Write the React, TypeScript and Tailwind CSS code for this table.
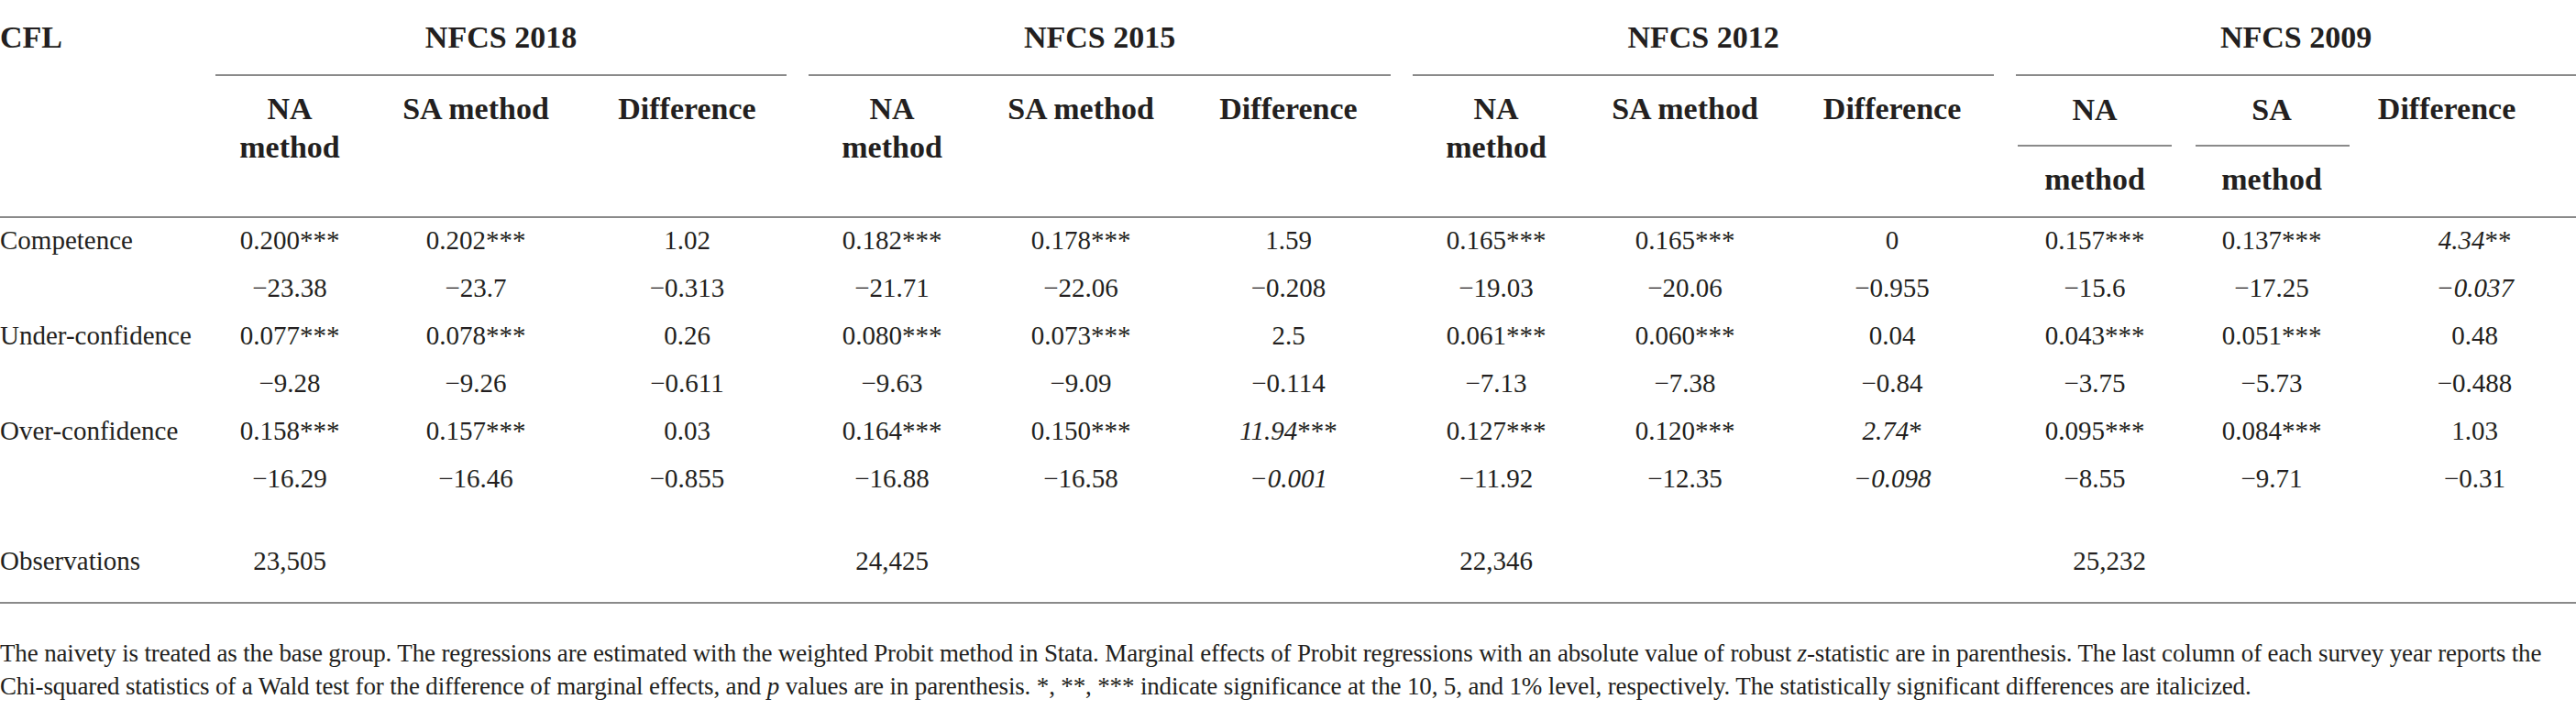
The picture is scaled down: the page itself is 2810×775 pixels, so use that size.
import React from 'react'

// "_" prefix marks an italicized (significant) difference
const rows: { label: string; values: string[] }[] = [
  { label: 'Competence', values: ['0.200***', '0.202***', '1.02', '0.182***', '0.178***', '1.59', '0.165***', '0.165***', '0', '0.157***', '0.137***', '_4.34**'] },
  { label: '', values: ['−23.38', '−23.7', '−0.313', '−21.71', '−22.06', '−0.208', '−19.03', '−20.06', '−0.955', '−15.6', '−17.25', '_−0.037'] },
  { label: 'Under-confidence', values: ['0.077***', '0.078***', '0.26', '0.080***', '0.073***', '2.5', '0.061***', '0.060***', '0.04', '0.043***', '0.051***', '0.48'] },
  { label: '', values: ['−9.28', '−9.26', '−0.611', '−9.63', '−9.09', '−0.114', '−7.13', '−7.38', '−0.84', '−3.75', '−5.73', '−0.488'] },
  { label: 'Over-confidence', values: ['0.158***', '0.157***', '0.03', '0.164***', '0.150***', '_11.94***', '0.127***', '0.120***', '_2.74*', '0.095***', '0.084***', '1.03'] },
  { label: '', values: ['−16.29', '−16.46', '−0.855', '−16.88', '−16.58', '_−0.001', '−11.92', '−12.35', '_−0.098', '−8.55', '−9.71', '−0.31'] },
]

const observations = ['23,505', '', '', '24,425', '', '', '22,346', '', '', '25,232', '', '']

const Value = ({ v }: { v: string }) => {
  if (!v.startsWith('_')) return <>{v}</>
  const raw = v.slice(1)
  const num = raw.replace(/\*+$/, '')
  const stars = raw.slice(num.length)
  return (
    <>
      <i>{num}</i>
      {stars}
    </>
  )
}

const cellPad = (i: number) => (i === 11 ? 'pl-[28px] pr-3' : 'px-3')

export default function App() {
  return (
    <div className="w-[2810px] h-[775px] overflow-hidden bg-white text-[#231f20] font-['Liberation_Serif',serif]">
      <table className="table-fixed border-collapse w-[2810px]">
        <colgroup>
          <col className="w-[223px]" />
          <col className="w-[186px]" />
          <col className="w-[220px]" />
          <col className="w-[241px]" />
          <col className="w-[206px]" />
          <col className="w-[206px]" />
          <col className="w-[247px]" />
          <col className="w-[206px]" />
          <col className="w-[206px]" />
          <col className="w-[246px]" />
          <col className="w-[196px]" />
          <col className="w-[190px]" />
          <col className="w-[237px]" />
        </colgroup>
        <thead className="text-[34px] leading-[42px] font-bold">
          <tr>
            <th className="text-left align-top pl-0 pt-[20px] font-bold">CFL</th>
            {['NFCS 2018', 'NFCS 2015', 'NFCS 2012', 'NFCS 2009'].map((g, i) => (
              <th key={g} colSpan={3} className={`align-top pt-[20px] font-bold text-center ${i === 3 ? 'pl-3 pr-0' : 'px-3'}`}>
                <div className="border-b-2 border-[#8a8a8a] pb-[19px]">{g}</div>
              </th>
            ))}
          </tr>
          <tr>
            <th className="border-b-2 border-[#8a8a8a]" />
            {[0, 1, 2].map(g => (
              <React.Fragment key={g}>
                <th className="align-top text-center px-3 pt-[15px] font-bold border-b-2 border-[#8a8a8a]">
                  NA
                  <br />
                  method
                </th>
                <th className="align-top text-center px-3 pt-[15px] font-bold border-b-2 border-[#8a8a8a]">SA method</th>
                <th className="align-top text-center px-3 pt-[15px] font-bold border-b-2 border-[#8a8a8a]">Difference</th>
              </React.Fragment>
            ))}
            {['NA', 'SA'].map(t => (
              <th key={t} className="align-top text-center px-3 pt-[16px] pb-[19px] font-bold border-b-2 border-[#8a8a8a]">
                <div>{t}</div>
                <div className="mx-auto mt-[17px] w-[168px] border-t-2 border-[#8a8a8a]" />
                <div className="mt-[15px]">method</div>
              </th>
            ))}
            <th className="align-top text-center pl-3 pr-[57px] pt-[15px] font-bold border-b-2 border-[#8a8a8a]">Difference</th>
          </tr>
        </thead>
        <tbody className="text-[29px] leading-[48px]">
          {rows.map((r, ri) => (
            <tr key={ri}>
              <td className="text-left pl-0 pb-[4px] whitespace-nowrap">{r.label}</td>
              {r.values.map((v, i) => (
                <td key={i} className={`text-center pb-[4px] whitespace-nowrap ${cellPad(i)}`}>
                  <Value v={v} />
                </td>
              ))}
            </tr>
          ))}
          <tr>
            <td className="text-left pl-0 pt-[38px] pb-[21px] border-b-2 border-[#8a8a8a]">Observations</td>
            {observations.map((v, i) => (
              <td key={i} className={`text-center pt-[38px] pb-[21px] whitespace-nowrap border-b-2 border-[#8a8a8a] ${i === 9 ? 'pl-[44px] pr-3' : cellPad(i)}`}>
                {v}
              </td>
            ))}
          </tr>
        </tbody>
      </table>

      <p className="mt-[36px] text-[27px] leading-[36px] tracking-[-0.15px]">
        <span className="whitespace-nowrap">
          The naivety is treated as the base group. The regressions are estimated with the weighted Probit method in Stata. Marginal effects of Probit regressions with an absolute value of robust <i>z</i>-statistic are in parenthesis. The last column of each survey year reports the
        </span>
        <br />
        Chi-squared statistics of a Wald test for the difference of marginal effects, and <i>p</i> values are in parenthesis. *, **, *** indicate significance at the 10, 5, and 1% level, respectively. The statistically significant differences are italicized.
      </p>
    </div>
  )
}
